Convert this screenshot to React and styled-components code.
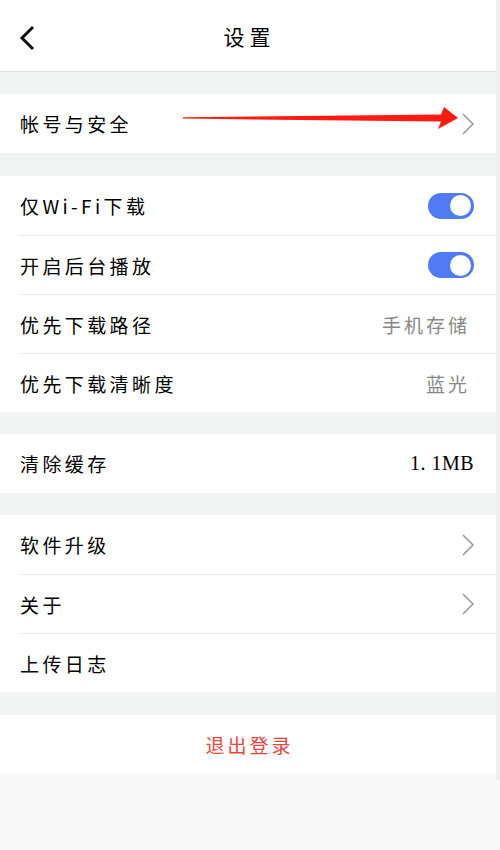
import React from "react";
import styled, { createGlobalStyle } from "styled-components";

const GlobalStyle = createGlobalStyle`
  html, body {
    margin: 0;
    padding: 0;
    background: #f9f9f9;
  }
  body {
    font-family: "Noto Sans CJK SC", "Noto Sans", sans-serif;
  }
`;

const Screen = styled.div`
  width: 500px;
  height: 850px;
  display: flex;
  background: #f9f9f9;
  overflow: hidden;
`;

const Page = styled.div`
  width: 496px;
  display: flex;
  flex-direction: column;
  background: #f2f3f3;
  height: 773px;
`;

const ScrollStrip = styled.div`
  width: 4px;
  height: 780px;
  background: #eeeeee;
`;

const Header = styled.div`
  height: 72px;
  background: #fff;
  border-bottom: 1px solid #dcdcdc;
  display: flex;
  align-items: center;
  position: relative;
  justify-content: center;
`;

const BackButton = styled.div`
  position: absolute;
  left: 17px;
  top: 24px;
  width: 24px;
  height: 28px;
  display: flex;
  align-items: center;
`;

const Title = styled.h1`
  margin: 0;
  font-size: 21px;
  font-weight: 400;
  letter-spacing: 5px;
  color: #000;
  padding-left: 3px;
`;

const Group = styled.div`
  background: #fff;
  margin-top: ${(p) => p.$gap}px;
  position: relative;
`;

const Row = styled.div`
  height: 59px;
  display: flex;
  align-items: center;
  justify-content: space-between;
  padding: 0 21px 0 20px;
  position: relative;
  box-sizing: border-box;
  border-top: ${(p) => (p.$first ? "none" : "1px solid #ececec")};
  margin-left: ${(p) => (p.$first ? 0 : 19)}px;
  padding-left: ${(p) => (p.$first ? 20 : 1)}px;
`;

const Label = styled.span`
  font-size: 19px;
  letter-spacing: 3.4px;
  color: #000;
`;

const Value = styled.span`
  font-size: 19px;
  letter-spacing: 3px;
  color: #888;
  margin-right: 5px;
`;

const Size = styled.span`
  font-family: "Liberation Serif", serif;
  font-size: 20px;
  letter-spacing: 0.5px;
  color: #000;
  margin-right: 1px;
`;

const Toggle = styled.div`
  width: 46px;
  height: 26px;
  border-radius: 13px;
  background: #4f7cf6;
  display: flex;
  align-items: center;
  justify-content: flex-end;
  padding: 0 3px;
  box-sizing: border-box;
  margin-right: 1px;
`;

const Knob = styled.div`
  width: 21px;
  height: 21px;
  border-radius: 50%;
  background: #fff;
`;

const Logout = styled.div`
  height: 58px;
  background: #fff;
  margin-top: 23px;
  display: flex;
  align-items: center;
  justify-content: center;
  font-size: 19px;
  letter-spacing: 3px;
  color: #e8463d;
  padding-left: 3px;
`;

const Annotation = styled.svg`
  position: absolute;
  left: 180px;
  top: 10px;
  overflow: visible;
`;

const Chevron = () => (
  <svg width="14" height="24" viewBox="0 0 14 24">
    <path d="M2 2 L12 12 L2 22" fill="none" stroke="#9a9a9a" strokeWidth="1.6" />
  </svg>
);

const BackIcon = () => (
  <svg width="20" height="26" viewBox="0 0 20 26">
    <path d="M16 2 L5 13 L16 24" fill="none" stroke="#111" strokeWidth="3" />
  </svg>
);

export default function App() {
  return (
    <Screen>
      <GlobalStyle />
      <Page>
        <Header>
          <BackButton>
            <BackIcon />
          </BackButton>
          <Title>设置</Title>
        </Header>

        <Group $gap={22}>
          <Row $first>
            <Label>帐号与安全</Label>
            <Chevron />
          </Row>
          <Annotation width="280" height="30" viewBox="0 0 280 30">
            <path
              d="M3 13.3 L261 10.5 L264 3 L278 14 L258 25 L261 17.5 L3 14.6 Z"
              fill="#ff1a12"
            />
          </Annotation>
        </Group>

        <Group $gap={23}>
          <Row $first>
            <Label>仅Wi-Fi下载</Label>
            <Toggle>
              <Knob />
            </Toggle>
          </Row>
          <Row>
            <Label>开启后台播放</Label>
            <Toggle>
              <Knob />
            </Toggle>
          </Row>
          <Row>
            <Label>优先下载路径</Label>
            <Value>手机存储</Value>
          </Row>
          <Row>
            <Label>优先下载清晰度</Label>
            <Value>蓝光</Value>
          </Row>
        </Group>

        <Group $gap={22}>
          <Row $first>
            <Label>清除缓存</Label>
            <Size>1. 1MB</Size>
          </Row>
        </Group>

        <Group $gap={22}>
          <Row $first>
            <Label>软件升级</Label>
            <Chevron />
          </Row>
          <Row>
            <Label>关于</Label>
            <Chevron />
          </Row>
          <Row>
            <Label>上传日志</Label>
          </Row>
        </Group>

        <Logout>退出登录</Logout>
      </Page>
      <ScrollStrip />
    </Screen>
  );
}
